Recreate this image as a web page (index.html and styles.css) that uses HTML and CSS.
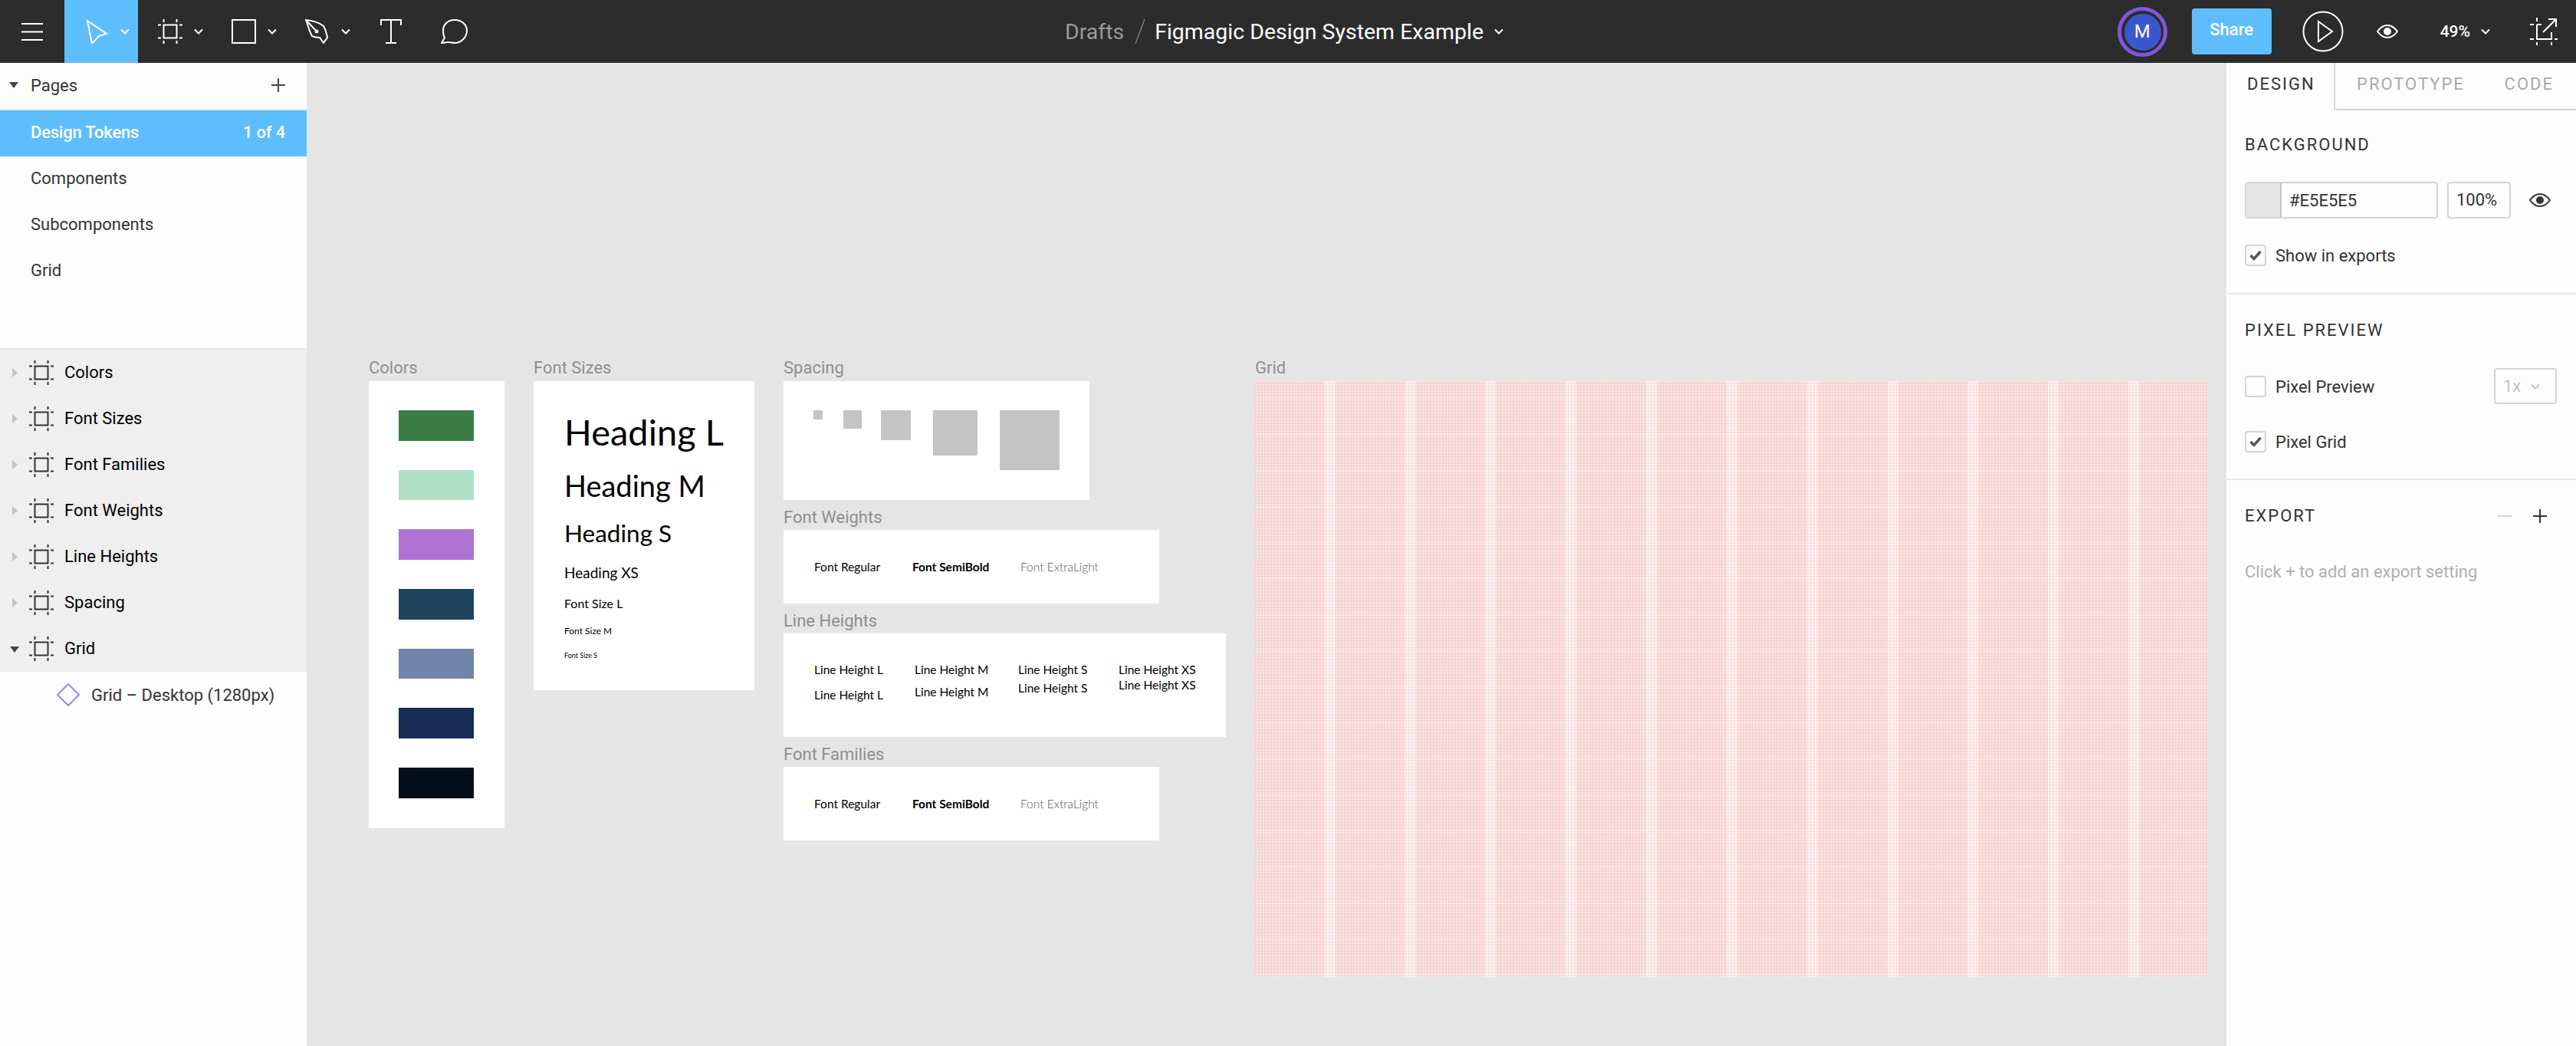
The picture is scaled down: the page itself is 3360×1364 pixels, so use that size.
FILE: index.html
```html
<!DOCTYPE html>
<html lang="en">
<head>
    <meta charset="UTF-8">
    <title>Figmagic Design System Example</title>
    <link rel="stylesheet" href="styles.css">
</head>
<body>
    <svg class="sprites" width="0" height="0">
        <symbol id="frame-icon" viewBox="0 0 32 32">
            <path d="M7.5 7.5h17v17h-17z M0 7.5h4 M28 7.5h4 M0 24.5h4 M28 24.5h4 M7.5 0v4 M24.5 0v4 M7.5 28v4 M24.5 28v4" fill="none" stroke="currentColor" stroke-width="2"/>
        </symbol>
        <symbol id="chevron" viewBox="0 0 12 8">
            <path d="M1 1.5l5 5 5-5" fill="none" stroke="currentColor" stroke-width="2"/>
        </symbol>
        <symbol id="eye" viewBox="0 0 28 18">
            <path d="M1 9C5 3.5 9 1 14 1s9 2.500 13 8c-4 5.500-8 8-13 8S5 14.500 1 9z" fill="none" stroke="currentColor" stroke-width="2"/>
            <circle cx="14" cy="9" r="5" fill="currentColor"/>
        </symbol>
        <symbol id="check" viewBox="0 0 16 14">
            <path d="M1.500 7l4.500 4.500L14.500 2" fill="none" stroke="currentColor" stroke-width="3.400"/>
        </symbol>
    </svg>

    <header class="topbar">
        <div class="tools">
            <div class="tool tool-menu">
                <svg class="icon" width="28" height="23" viewBox="0 0 28 23"><path d="M0 1h28M0 11.500h28M0 22h28" stroke="#fff" stroke-width="2"/></svg>
            </div>
            <div class="tool tool-active">
                <svg class="icon" width="32" height="32" viewBox="0 0 32 32"><path d="M4 2l25 17-10 3-9 10z" fill="none" stroke="#fff" stroke-width="2"/></svg>
                <svg class="chev"><use href="#chevron"/></svg>
            </div>
            <div class="tool">
                <svg class="icon" width="32" height="32"><use href="#frame-icon"/></svg>
                <svg class="chev"><use href="#chevron"/></svg>
            </div>
            <div class="tool">
                <svg class="icon" width="32" height="32" viewBox="0 0 32 32"><rect x="1" y="1" width="30" height="30" fill="none" stroke="#fff" stroke-width="2"/></svg>
                <svg class="chev"><use href="#chevron"/></svg>
            </div>
            <div class="tool">
                <svg class="icon" width="32" height="32" viewBox="0 0 32 32"><path d="M1 1c9 1 17 3 23 8 3 5 4 10 5 15l-5 7-5-7c-3 0-6 0-10-2C6 17 4 9 1 1zM1 1l14 15" fill="none" stroke="#fff" stroke-width="2"/><circle cx="15" cy="16" r="2.500" fill="#fff"/></svg>
                <svg class="chev"><use href="#chevron"/></svg>
            </div>
            <div class="tool">
                <svg class="icon" width="32" height="32" viewBox="0 0 32 32"><path d="M3 8V1h26v7M16 1v30M9 31h14" fill="none" stroke="#fff" stroke-width="2"/></svg>
            </div>
            <div class="tool tool-comment">
                <svg width="36" height="32" viewBox="0 0 36 32"><path d="M1 31l4-7C3 21 3 18 3 15 3 7 9 1 18 1s16 6 16 14-7 16-16 16c-3 0-5-1-8-1-3 0-6 1-9 1z" fill="none" stroke="#fff" stroke-width="2"/></svg>
            </div>
        </div>

        <div class="doc-title">
            <span class="doc-folder">Drafts</span>
            <svg class="doc-slash" width="14" height="32" viewBox="0 0 14 32"><path d="M13 0L1 32" stroke="#777" stroke-width="1.500"/></svg>
            <span class="doc-name">Figmagic Design System Example</span>
            <svg class="chev chev-title"><use href="#chevron"/></svg>
        </div>

        <div class="actions">
            <div class="avatar">M</div>
            <div class="share">Share</div>
            <svg class="play" width="54" height="54" viewBox="0 0 54 54"><circle cx="27" cy="27" r="25.500" fill="none" stroke="#fff" stroke-width="2"/><path d="M21 14l18 13-18 13z" fill="none" stroke="#fff" stroke-width="2"/></svg>
            <svg class="top-eye" width="28" height="18"><use href="#eye"/></svg>
            <span class="zoom-level">49%</span>
            <svg class="chev chev-zoom"><use href="#chevron"/></svg>
            <svg class="export-icon" width="36" height="36" viewBox="0 0 36 36"><path d="M9 9v19h19v-9M15 9h-6M0 9h5M0 28h5M32 28h4M9 0v5M9 32v4M28 32v4M17 19L33 3M24 2h10v10" fill="none" stroke="#fff" stroke-width="2"/></svg>
        </div>
    </header>

    <main class="workspace">
        <aside class="sidebar">
            <section class="pages">
                <div class="pages-head">
                    <span class="arrow-down"></span>
                    <span class="pages-title">Pages</span>
                    <svg class="plus" width="18" height="18" viewBox="0 0 18 18"><path d="M9 0v18M0 9h18" stroke="#444" stroke-width="2"/></svg>
                </div>
                <div class="page-row page-current"><span>Design Tokens</span><span>1 of 4</span></div>
                <div class="page-row">Components</div>
                <div class="page-row">Subcomponents</div>
                <div class="page-row">Grid</div>
            </section>
            <section class="layers">
                <div class="layer"><span class="arrow-right"></span><svg width="32" height="32"><use href="#frame-icon"/></svg><span>Colors</span></div>
                <div class="layer"><span class="arrow-right"></span><svg width="32" height="32"><use href="#frame-icon"/></svg><span>Font Sizes</span></div>
                <div class="layer"><span class="arrow-right"></span><svg width="32" height="32"><use href="#frame-icon"/></svg><span>Font Families</span></div>
                <div class="layer"><span class="arrow-right"></span><svg width="32" height="32"><use href="#frame-icon"/></svg><span>Font Weights</span></div>
                <div class="layer"><span class="arrow-right"></span><svg width="32" height="32"><use href="#frame-icon"/></svg><span>Line Heights</span></div>
                <div class="layer"><span class="arrow-right"></span><svg width="32" height="32"><use href="#frame-icon"/></svg><span>Spacing</span></div>
                <div class="layer"><span class="arrow-down arrow-layer"></span><svg width="32" height="32"><use href="#frame-icon"/></svg><span>Grid</span></div>
            </section>
            <div class="layer-child">
                <svg width="30" height="30" viewBox="0 0 30 30"><path d="M15 1l14 14-14 14L1 15z" fill="none" stroke="#9a86f2" stroke-width="2"/></svg>
                <span>Grid – Desktop (1280px)</span>
            </div>
        </aside>

        <div class="canvas">
            <div class="board board-colors">
                <div class="board-label">Colors</div>
                <div class="frame swatches">
                    <div class="swatch c-green"></div>
                    <div class="swatch c-mint"></div>
                    <div class="swatch c-purple"></div>
                    <div class="swatch c-teal"></div>
                    <div class="swatch c-slate"></div>
                    <div class="swatch c-navy"></div>
                    <div class="swatch c-ink"></div>
                </div>
            </div>

            <div class="board board-sizes">
                <div class="board-label">Font Sizes</div>
                <div class="frame sizes">
                    <div class="fs fs-hl">Heading L</div>
                    <div class="fs fs-hm">Heading M</div>
                    <div class="fs fs-hs">Heading S</div>
                    <div class="fs fs-hxs">Heading XS</div>
                    <div class="fs fs-l">Font Size L</div>
                    <div class="fs fs-m">Font Size M</div>
                    <div class="fs fs-s">Font Size S</div>
                </div>
            </div>

            <div class="board board-spacing">
                <div class="board-label">Spacing</div>
                <div class="frame spacing">
                    <div class="sp sp-1"></div>
                    <div class="sp sp-2"></div>
                    <div class="sp sp-3"></div>
                    <div class="sp sp-4"></div>
                    <div class="sp sp-5"></div>
                </div>
            </div>

            <div class="board board-weights">
                <div class="board-label board-label-tight">Font Weights</div>
                <div class="frame font-row">
                    <span>Font Regular</span>
                    <span class="semi">Font SemiBold</span>
                    <span class="light">Font ExtraLight</span>
                </div>
            </div>

            <div class="board board-lines">
                <div class="board-label board-label-tight">Line Heights</div>
                <div class="frame line-grid">
                    <div class="lh-l">Line Height L<br>Line Height L</div>
                    <div class="lh-m">Line Height M<br>Line Height M</div>
                    <div class="lh-s">Line Height S<br>Line Height S</div>
                    <div class="lh-xs">Line Height XS<br>Line Height XS</div>
                </div>
            </div>

            <div class="board board-families">
                <div class="board-label board-label-tight">Font Families</div>
                <div class="frame font-row">
                    <span>Font Regular</span>
                    <span class="semi">Font SemiBold</span>
                    <span class="light">Font ExtraLight</span>
                </div>
            </div>

            <div class="board board-grid">
                <div class="board-label">Grid</div>
                <div class="frame layout-grid">
                    <div></div><div></div><div></div><div></div><div></div><div></div>
                    <div></div><div></div><div></div><div></div><div></div><div></div>
                </div>
            </div>
        </div>

        <aside class="panel">
            <div class="tabs">
                <div class="tab tab-on">DESIGN</div>
                <div class="tab-rest">
                    <span>PROTOTYPE</span>
                    <span>CODE</span>
                </div>
            </div>

            <section class="block block-bg">
                <h2 class="block-title">BACKGROUND</h2>
                <div class="bg-row">
                    <div class="color-field">
                        <span class="color-chip"></span>
                        <span class="color-hex">#E5E5E5</span>
                    </div>
                    <div class="opacity-field">100%</div>
                    <svg class="panel-eye" width="28" height="18"><use href="#eye"/></svg>
                </div>
                <div class="check-row check-exports">
                    <span class="checkbox"><svg width="16" height="14"><use href="#check"/></svg></span>
                    <span>Show in exports</span>
                </div>
            </section>

            <section class="block block-pixel">
                <h2 class="block-title">PIXEL PREVIEW</h2>
                <div class="check-row check-preview">
                    <span class="checkbox"></span>
                    <span>Pixel Preview</span>
                    <div class="scale-select">1x<svg class="chev"><use href="#chevron"/></svg></div>
                </div>
                <div class="check-row">
                    <span class="checkbox"><svg width="16" height="14"><use href="#check"/></svg></span>
                    <span>Pixel Grid</span>
                </div>
            </section>

            <section class="block-export">
                <div class="export-head">
                    <h2 class="block-title">EXPORT</h2>
                    <svg width="18" height="18" viewBox="0 0 18 18"><path d="M0 9h18" stroke="#d4d4d4" stroke-width="2"/></svg>
                    <svg width="18" height="18" viewBox="0 0 18 18"><path d="M9 0v18M0 9h18" stroke="#333" stroke-width="2"/></svg>
                </div>
                <p class="export-hint">Click + to add an export setting</p>
            </section>
        </aside>
    </main>
</body>
</html>
```

FILE: styles.css
```css
* {
    margin: 0;
    padding: 0;
    box-sizing: border-box;
}
html, body {
    height: 100%;
    overflow: hidden;
}
body {
    display: flex;
    flex-direction: column;
    font-family: Roboto, "Liberation Sans", sans-serif;
    font-size: 22px;
    color: #333;
    background: #e5e5e5;
}
svg {
    display: block;
    flex: none;
}
.sprites {
    position: absolute;
}

/* top bar */
.topbar {
    height: 82px;
    flex: none;
    display: grid;
    grid-template-columns: 1fr auto 1fr;
    align-items: center;
    background: #2c2c2c;
    color: #fff;
}
.tools {
    display: flex;
    height: 82px;
}
.tool {
    width: 96px;
    display: flex;
    align-items: center;
    gap: 15px;
    padding-left: 26px;
}
.tool-menu {
    width: 84px;
    padding-left: 28px;
}
.tool-active {
    background: #5ebdfc;
}
.tool-comment {
    padding-left: 11px;
}
.chev {
    width: 12px;
    height: 8px;
    color: #fff;
}
.doc-title {
    display: flex;
    align-items: center;
    margin-right: 10px;
    font-size: 28.500px;
}
.doc-folder {
    color: #9a9a9a;
}
.doc-slash {
    margin: 0 12px 0 14px;
}
.chev-title {
    margin-left: 14px;
}
.actions {
    display: flex;
    align-items: center;
    justify-content: flex-end;
    padding-right: 24px;
}
.avatar {
    width: 65px;
    height: 65px;
    display: flex;
    align-items: center;
    justify-content: center;
    border: 5px solid #7e57dc;
    border-radius: 50%;
    padding: 3.500px;
    background: #3b57cf content-box;
    font-size: 24px;
}
.share {
    width: 104px;
    height: 60px;
    margin-left: 32px;
    border-radius: 4px;
    background: #5ebdfc;
    font-size: 22px;
    font-weight: 500;
    line-height: 56px;
    text-align: center;
}
.play {
    margin-left: 40px;
}
.top-eye {
    margin-left: 43px;
}
.zoom-level {
    margin-left: 55px;
    font-size: 21px;
    font-weight: 500;
}
.chev-zoom {
    margin-left: 14px;
}
.export-icon {
    margin-left: 52px;
}

/* layout */
.workspace {
    flex: 1;
    display: flex;
    min-height: 0;
}
.sidebar {
    width: 400px;
    flex: none;
    background: #fdfdfd;
}
.canvas {
    flex: 1;
    position: relative;
    background: #e5e5e5;
}
.panel {
    width: 456px;
    flex: none;
    background: #fdfdfd;
}

/* left sidebar */
.pages {
    height: 374px;
    border-bottom: 2px solid #e5e5e5;
}
.pages-head {
    height: 62px;
    display: flex;
    align-items: center;
    padding: 0 28px 2px 12px;
    border-bottom: 2px solid #e5e5e5;
}
.arrow-down {
    width: 0;
    height: 0;
    border-left: 6px solid transparent;
    border-right: 6px solid transparent;
    border-top: 8px solid #444;
}
.pages-title {
    flex: 1;
    margin-left: 16px;
}
.page-row {
    height: 60px;
    display: flex;
    align-items: center;
    justify-content: space-between;
    padding: 0 28px 3px 40px;
}
.page-current {
    background: #5ebdfc;
    color: #fff;
    font-weight: 500;
    letter-spacing: -0.2px;
}
.layers {
    background: #efefef;
    color: #000;
}
.layer {
    height: 60px;
    display: flex;
    align-items: center;
    padding-left: 38px;
    position: relative;
    color: #000;
}
.layer svg {
    color: #333;
}
.layer span:last-child {
    margin: 0 0 2px 14px;
}
.arrow-right {
    position: absolute;
    left: 16px;
    top: 24px;
    border-top: 6px solid transparent;
    border-bottom: 6px solid transparent;
    border-left: 7px solid #c4c4c4;
}
.arrow-layer {
    position: absolute;
    left: 13px;
    top: 27px;
}
.layer-child {
    height: 60px;
    display: flex;
    align-items: center;
    gap: 15px;
    padding-left: 74px;
    color: #333;
}

/* canvas boards */
.board {
    position: absolute;
}
.board-label {
    height: 30px;
    color: #8f8f8f;
    line-height: 26px;
}
.board-label-tight {
    height: 29px;
}
.frame {
    background: #fff;
}
.board-colors {
    left: 81px;
    top: 385px;
    width: 177px;
}
.board-sizes {
    left: 296px;
    top: 385px;
    width: 288px;
}
.board-spacing {
    left: 622px;
    top: 385px;
    width: 399px;
}
.board-weights {
    left: 622px;
    top: 580px;
    width: 490px;
}
.board-lines {
    left: 622px;
    top: 715px;
    width: 577px;
}
.board-families {
    left: 622px;
    top: 889px;
    width: 490px;
}
.board-grid {
    left: 1237px;
    top: 385px;
    width: 1244px;
}

.swatches {
    height: 583px;
    display: flex;
    flex-direction: column;
    gap: 38.200px;
    padding: 38px 40px 0 39px;
}
.swatch {
    height: 39.500px;
    flex: none;
}
.c-green { background: #3a7d44; }
.c-mint { background: #b0e0c8; }
.c-purple { background: #b072d2; }
.c-teal { background: #20445e; }
.c-slate { background: #6f84a8; }
.c-navy { background: #172d55; }
.c-ink { background: #030f1b; }

.sizes {
    height: 403px;
    padding: 31px 0 0 40px;
    font-family: Lato, "Noto Sans", sans-serif;
    color: #000;
}
.fs {
    white-space: nowrap;
}
.fs-hl { height: 70px; line-height: 70px; font-size: 47px; }
.fs-hm { height: 70px; line-height: 70px; font-size: 38px; }
.fs-hs { height: 54px; line-height: 54px; font-size: 31.500px; }
.fs-hxs { height: 50px; line-height: 50px; font-size: 19px; }
.fs-l { height: 29px; line-height: 29px; font-size: 16px; }
.fs-m { height: 44px; line-height: 44px; font-size: 12px; }
.fs-s { height: 20px; line-height: 20px; font-size: 9px; }

.spacing {
    height: 155px;
    display: flex;
    align-items: flex-start;
    padding: 38px 0 0 39px;
}
.sp {
    background: #c4c4c4;
    flex: none;
}
.sp-1 { width: 12px; height: 12px; }
.sp-2 { width: 24px; height: 24px; margin-left: 27px; }
.sp-3 { width: 39px; height: 39px; margin-left: 25px; }
.sp-4 { width: 58px; height: 59px; margin-left: 29px; }
.sp-5 { width: 78px; height: 78px; margin-left: 29px; }

.font-row {
    height: 96px;
    display: grid;
    grid-template-columns: 128px 141px auto;
    align-items: center;
    padding-left: 40px;
    font-family: Lato, "Noto Sans", sans-serif;
    font-size: 15.500px;
    color: #000;
}
.semi {
    font-weight: 700;
}
.light {
    font-weight: 300;
    color: #555;
}
.line-grid {
    height: 135px;
    display: grid;
    grid-template-columns: 131px 135px 131px auto;
    align-items: first baseline;
    padding: 31px 0 0 40px;
    font-family: Lato, "Noto Sans", sans-serif;
    font-size: 15.500px;
    color: #000;
}
.lh-l { line-height: 33px; }
.lh-m { line-height: 29px; }
.lh-s { line-height: 24px; }
.lh-xs { line-height: 19.500px; }

.layout-grid {
    height: 777px;
    display: flex;
    gap: 14px;
    position: relative;
    background: #fdf5f5;
}
.layout-grid div {
    flex: 1;
    background: #fbe3e3;
}
.layout-grid::after {
    content: "";
    position: absolute;
    inset: 0;
    background-image:
        linear-gradient(90deg, rgba(225, 130, 130, 0.1) 2px, transparent 2px),
        linear-gradient(0deg, rgba(225, 130, 130, 0.1) 2px, transparent 2px),
        repeating-linear-gradient(0deg, rgba(255, 255, 255, 0.22) 0 4px, transparent 4px 47px);
    background-size: 4px 4px, 4px 4px, auto;
}

/* right panel */
.tabs {
    height: 62px;
    display: flex;
    letter-spacing: 2px;
    font-size: 22px;
}
.tab-on {
    width: 142px;
    padding: 14px 0 0 27px;
    color: #333;
    border-right: 2px solid #d4d4d4;
    line-height: 28px;
}
.tab-rest {
    flex: 1;
    display: flex;
    justify-content: space-between;
    padding: 14px 29px 0 28px;
    border-bottom: 2px solid #d4d4d4;
    border-bottom-left-radius: 4px;
    line-height: 28px;
    color: #aaa;
}
.block {
    border-bottom: 2px solid #e8e8e8;
    padding-left: 24px;
}
.block-title {
    font-size: 22px;
    font-weight: 400;
    letter-spacing: 2px;
    line-height: 28px;
}
.block-bg {
    height: 240px;
    padding-top: 31px;
}
.bg-row {
    display: flex;
    align-items: center;
    margin-top: 34px;
}
.color-field {
    width: 252px;
    height: 48px;
    display: flex;
    align-items: center;
    border: 2px solid #d4d4d4;
    border-radius: 4px;
    overflow: hidden;
}
.color-chip {
    width: 46px;
    height: 100%;
    background: #e5e5e5;
    border-right: 2px solid #c4c4c4;
}
.color-hex {
    margin-left: 10px;
}
.opacity-field {
    width: 83px;
    height: 48px;
    margin-left: 12px;
    padding-left: 10px;
    border: 2px solid #d4d4d4;
    border-radius: 4px;
    line-height: 44px;
}
.panel-eye {
    margin-left: 24px;
    color: #333;
}
.check-row {
    display: flex;
    align-items: center;
    gap: 12px;
    height: 28px;
}
.check-exports {
    margin-top: 34px;
}
.checkbox {
    width: 28px;
    height: 28px;
    display: flex;
    align-items: center;
    justify-content: center;
    flex: none;
    border: 2px solid #d4d4d4;
    border-radius: 4px;
    color: #555;
}
.block-pixel {
    height: 242px;
    padding-top: 33px;
}
.check-preview {
    position: relative;
    margin: 45px 0 44px;
}
.scale-select {
    position: absolute;
    left: 325px;
    top: -10px;
    width: 82px;
    height: 47px;
    display: flex;
    align-items: center;
    justify-content: space-between;
    padding: 0 20px 0 10px;
    border: 2px solid #d4d4d4;
    border-radius: 4px;
    color: #c4c4c4;
}
.scale-select .chev {
    color: #c4c4c4;
}
.block-export {
    padding: 33px 38px 0 24px;
}
.export-head {
    display: flex;
    align-items: center;
    gap: 28px;
}
.export-head .block-title {
    flex: 1;
}
.export-hint {
    margin-top: 46px;
    color: #b0b0b0;
}
```
